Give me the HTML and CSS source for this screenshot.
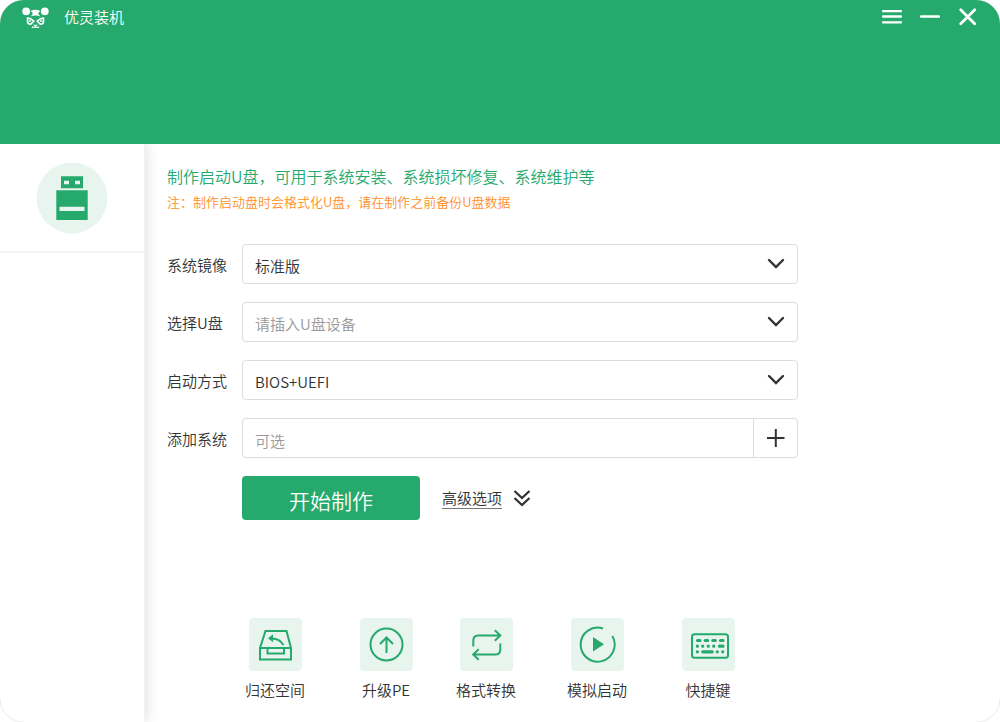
FILE: index.html
```html
<!DOCTYPE html>
<html lang="zh-CN">
<head>
<meta charset="utf-8">
<meta name="viewport" content="width=device-width, initial-scale=1">
<title>优灵装机</title>
<link rel="stylesheet" href="styles.css">
</head>
<body>
<div class="window">
  <header class="titlebar">
    <div class="brand">
      <svg class="brand-logo" width="28" height="22" viewBox="0 0 28 22" aria-hidden="true">
        <g fill="#fff">
          <circle cx="4.200" cy="5.300" r="3.900"/>
          <circle cx="22.800" cy="5.300" r="3.900"/>
          <path d="M8.500 5Q13.500 2.500 18.500 5L16.500 6.500V8.500L18.500 10.500Q13.500 8.500 8.500 10.500L10.500 8.500V6.500Z"/>
          <path d="M11 18.700h5l-1.700 1.600v1h-1.600v-1z"/>
        </g>
        <g fill="none" stroke="#fff">
          <path stroke-width="1.700" d="M5.600 12Q8.500 12 11.700 15L9 18Q6 18.500 5.600 16ZM21.400 12Q18.500 12 15.300 15L18 18Q21 18.500 21.400 16Z"/>
          <path stroke-width="1.400" d="M10 20.800Q13.500 23 17 20.800"/>
        </g>
        <circle cx="8" cy="15" r="1" fill="#fff"/>
        <circle cx="19" cy="15" r="1" fill="#fff"/>
      </svg>
      <span>优灵装机</span>
    </div>
    <div class="window-controls">
      <button class="window-button" type="button" aria-label="菜单">
        <svg width="20" height="20" viewBox="0 0 20 20"><path d="M1 4.200h18M1 9.500h18M1 15.300h18" stroke="#fff" stroke-width="2.300" stroke-linecap="round"/></svg>
      </button>
      <button class="window-button" type="button" aria-label="最小化">
        <svg width="20" height="20" viewBox="0 0 20 20"><path d="M1 9.500h18" stroke="#fff" stroke-width="2.300" stroke-linecap="round"/></svg>
      </button>
      <button class="window-button" type="button" aria-label="关闭">
        <svg width="20" height="20" viewBox="0 0 20 20"><path d="M2.700 2.700l14 14M16.700 2.700l-14 14" stroke="#fff" stroke-width="2.800" stroke-linecap="round"/></svg>
      </button>
    </div>
  </header>

  <div class="body">
    <nav class="sidebar">
      <button class="side-item" type="button" aria-label="U盘启动">
        <svg width="72" height="72" viewBox="0 0 72 72" aria-hidden="true">
          <circle cx="36" cy="36" r="35.500" fill="#e8f5ee"/>
          <path fill="#25a96c" d="M25 14.300h22v12H25zM20.300 28.300h31.400V58H20.300z"/>
          <path fill="#e8f5ee" d="M28 18.700h5v3.500h-5zM39 18.700h5v3.500h-5zM23.500 44.700h25V49h-25z"/>
        </svg>
      </button>
    </nav>

    <main class="content">
      <h1 class="headline">制作启动U盘，可用于系统安装、系统损坏修复、系统维护等</h1>
      <p class="notice">注：制作启动盘时会格式化U盘，请在制作之前备份U盘数据</p>

      <form class="form">
        <label class="label" for="image">系统镜像</label>
        <div class="field">
          <select class="control" id="image"><option>标准版</option></select>
          <svg class="chevron" width="18" height="12" viewBox="0 0 18 12"><path d="M2 2l7 7 7-7"/></svg>
        </div>

        <label class="label" for="drive">选择U盘</label>
        <div class="field">
          <select class="control muted" id="drive"><option>请插入U盘设备</option></select>
          <svg class="chevron" width="18" height="12" viewBox="0 0 18 12"><path d="M2 2l7 7 7-7"/></svg>
        </div>

        <label class="label" for="boot">启动方式</label>
        <div class="field">
          <select class="control" id="boot"><option>BIOS+UEFI</option></select>
          <svg class="chevron" width="18" height="12" viewBox="0 0 18 12"><path d="M2 2l7 7 7-7"/></svg>
        </div>

        <label class="label" for="system">添加系统</label>
        <div class="input-group">
          <input class="control" id="system" type="text" placeholder="可选">
          <button class="add-button" type="button" aria-label="添加">
            <svg width="18" height="18" viewBox="0 0 18 18"><path d="M0 9h17.500M8.800 0v18" stroke="#333" stroke-width="2"/></svg>
          </button>
        </div>

        <div class="actions">
          <button class="start-button" type="button">开始制作</button>
          <a class="advanced" href="#advanced">
            <span class="advanced-text">高级选项</span>
            <svg width="18" height="18" viewBox="0 0 18 18" fill="none" stroke="#333" stroke-width="2.300"><path d="M1.500 2L9 9l7.500-7M1.500 9L9 16l7.500-7"/></svg>
          </a>
        </div>
      </form>

      <div class="tools">
        <button class="tool" type="button">
          <span class="tile"><svg width="53" height="53" viewBox="0 0 53 53" fill="none" stroke="#25a96c" stroke-width="2">
            <path d="M16.500 13h21l4.500 17v11.500H11V30zM11 30h31M18.500 30v5.500h16.500v-5.500"/>
            <path d="M34.500 27Q30 19.500 21 20.500"/><path d="M19 20.300l5-4v8z" fill="#25a96c" stroke="none"/>
          </svg></span>
          <span>归还空间</span>
        </button>
        <button class="tool" type="button">
          <span class="tile"><svg width="53" height="53" viewBox="0 0 53 53" fill="none" stroke="#25a96c" stroke-width="2">
            <circle cx="26.500" cy="26.500" r="16"/><path d="M26.500 35V19.500M20 26l6.500-6.500L33 26"/>
          </svg></span>
          <span>升级PE</span>
        </button>
        <button class="tool" type="button">
          <span class="tile"><svg width="53" height="53" viewBox="0 0 53 53" fill="none" stroke="#25a96c" stroke-width="2">
            <path d="M13.300 28.500v-6q0-5 5-5H40M34.800 12.300l5.500 5.200-5.500 5.200M40.300 25.500v6q0 5-5 5H13.500M18.700 31.300l-5.500 5.200 5.500 5.200"/>
          </svg></span>
          <span>格式转换</span>
        </button>
        <button class="tool" type="button">
          <span class="tile"><svg width="53" height="53" viewBox="0 0 53 53" fill="none" stroke="#25a96c" stroke-width="2">
            <path d="M32 10.500A17 17 0 1 0 41.300 18"/><path d="M22 19v14.500l11-7.200z" fill="#25a96c" stroke="none"/>
          </svg></span>
          <span>模拟启动</span>
        </button>
        <button class="tool" type="button">
          <span class="tile"><svg width="53" height="53" viewBox="0 0 53 53" fill="none" stroke="#25a96c" stroke-width="2">
            <rect x="10" y="16.300" width="36" height="23.500" rx="2.500"/>
            <path stroke-width="3.200" stroke-linecap="round" d="M15.500 22.500h2.500M23.200 22.500h2.500M30.800 22.500h2.500M38.500 22.500h2.500M15.300 28.200h.1M20.700 28.200h.1M26.200 28.200h.1M31.700 28.200h.1M37.500 28.200h3.500M15.300 33.800h.1M20.700 33.800h9.500M35.200 33.800h.1M40.700 33.800h.1"/>
          </svg></span>
          <span>快捷键</span>
        </button>
      </div>
    </main>
  </div>
</div>
</body>
</html>
```
FILE: styles.css
```css
* {
  box-sizing: border-box;
}

body {
  margin: 0;
  background: #fff;
  color: #333;
  font: 350 16px/24px "Noto Sans CJK SC DemiLight", "Noto Sans CJK SC", sans-serif;
}

button,
input,
select {
  margin: 0;
  padding: 0;
  border: 0;
  background: none;
  color: inherit;
  font: inherit;
}

svg {
  display: block;
}

.window {
  display: flex;
  flex-direction: column;
  min-height: 100vh;
  overflow: hidden;
  border-radius: 24px;
  background: #fff;
  box-shadow: 0 0 1px rgba(0, 0, 0, 0.3);
}

.titlebar {
  z-index: 1;
  display: flex;
  align-items: flex-start;
  justify-content: space-between;
  height: 144px;
  padding: 5px 22px 0;
  background: #25a96c;
  color: #fff;
}

.brand {
  display: flex;
  align-items: center;
  gap: 14px;
  font-size: 15px;
}

.window-controls {
  display: flex;
  gap: 18px;
  padding-top: 2px;
}

.body {
  display: flex;
  flex: 1;
}

.sidebar {
  width: 145px;
  flex: none;
  border-right: 1px solid #f3f3f3;
  box-shadow: 2px 0 12px rgba(0, 0, 0, 0.12);
}

.side-item {
  display: flex;
  justify-content: center;
  width: 100%;
  padding: 18px 0 17px;
  border-bottom: 2px solid #f3f3f3;
}

.content {
  display: flex;
  flex: 1;
  flex-direction: column;
  padding: 20px 22px;
}

.headline,
.notice {
  margin: 0;
}

.headline {
  color: #25a96c;
  font-size: 16px;
  font-weight: inherit;
}

.notice {
  margin: 2px 0 30px;
  color: #ff8f1f;
  font-size: 13px;
}

.form {
  display: grid;
  grid-template-columns: 75px 1fr;
  align-items: center;
  row-gap: 18px;
  max-width: 631px;
  font-size: 15px;
}

.label {
  padding-top: 2px;
}

.field {
  display: grid;
  grid-template-columns: 1fr auto;
  align-items: center;
}

.control {
  width: 100%;
  height: 40px;
  padding: 4px 12px 0;
  border: 1px solid #dcdcdc;
  border-radius: 4px;
  appearance: none;
}

.field .control {
  grid-area: 1 / 1 / 2 / 3;
}

.muted,
.control::placeholder {
  color: #999;
}

.chevron {
  grid-area: 1 / 2;
  margin-right: 13px;
  fill: none;
  stroke: #333;
  stroke-width: 2.4;
  stroke-linecap: round;
  pointer-events: none;
}

.input-group {
  display: flex;
  border: 1px solid #dcdcdc;
  border-radius: 4px;
}

.input-group .control {
  flex: 1;
  height: 38px;
  border: 0;
}

.add-button {
  display: grid;
  place-items: center;
  width: 44px;
  border-left: 1px solid #dcdcdc;
}

.actions {
  display: flex;
  grid-column: 2;
  align-items: center;
  gap: 22px;
}

.start-button {
  width: 178px;
  height: 44px;
  padding-top: 3px;
  border-radius: 4px;
  background: #25a96c;
  color: #fff;
  font-size: 21px;
  font-weight: 300;
}

.advanced {
  display: flex;
  align-items: center;
  gap: 11px;
  color: inherit;
  text-decoration: none;
}

.advanced-text {
  border-bottom: 1px solid #777;
  line-height: 20px;
}

.tools {
  display: grid;
  grid-template-columns: 122px 100px 100px 122px 100px;
  margin-top: auto;
  padding-left: 47px;
  font-size: 15px;
}

.tool {
  display: flex;
  flex-direction: column;
  align-items: center;
  gap: 7px;
}

.tile {
  border-radius: 4px;
  background: #e8f5ee;
}
```
